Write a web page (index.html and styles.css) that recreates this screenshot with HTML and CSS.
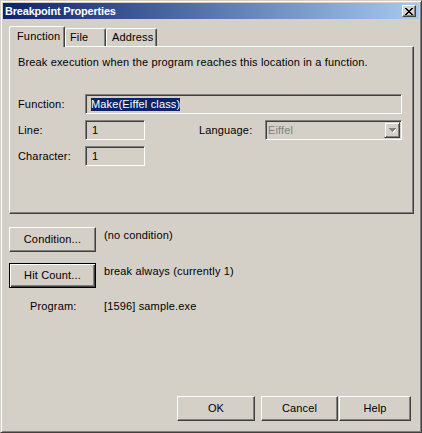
FILE: index.html
```html
<!DOCTYPE html>
<html>
<head>
<meta charset="utf-8">
<title>Breakpoint Properties</title>
<link rel="stylesheet" href="styles.css">
</head>
<body>
<div class="window">
  <div class="titlebar">
    <span class="title">Breakpoint Properties</span>
    <span class="close-btn">
      <svg width="8" height="7" viewBox="0 0 8 7" shape-rendering="crispEdges">
        <path fill="#000" d="M0 0h2v1h-2z M6 0h2v1h-2z M1 1h2v1h-2z M5 1h2v1h-2z M2 2h4v1h-4z M3 3h2v1h-2z M2 4h4v1h-4z M1 5h2v1h-2z M5 5h2v1h-2z M0 6h2v1h-2z M6 6h2v1h-2z"/>
      </svg>
    </span>
  </div>
  <div class="client">
    <div class="tabs">
      <div class="tab tab-active tab-function">Function</div>
      <div class="tab tab-file">File</div>
      <div class="tab tab-address">Address</div>
    </div>
    <div class="panel">
      <p class="desc">Break execution when the program reaches this location in a function.</p>
      <div class="row row-function">
        <span class="lbl">Function:</span>
        <div class="field field-wide"><span class="sel">Make(Eiffel class)</span></div>
      </div>
      <div class="row">
        <span class="lbl">Line:</span>
        <div class="field field-short">1</div>
        <span class="lbl lbl-lang">Language:</span>
        <div class="field combo">
          <span class="combo-text">Eiffel</span>
          <span class="combo-btn">
            <svg width="7" height="5" viewBox="0 0 7 5" shape-rendering="crispEdges">
              <path fill="#fff" d="M1 1h7v1h-7z M2 2h5v1h-5z M3 3h3v1h-3z M4 4h1v1h-1z"/>
              <path fill="#808080" d="M0 0h7v1h-7z M1 1h5v1h-5z M2 2h3v1h-3z M3 3h1v1h-1z"/>
            </svg>
          </span>
        </div>
      </div>
      <div class="row">
        <span class="lbl">Character:</span>
        <div class="field field-short">1</div>
      </div>
    </div>
    <div class="action-row action-condition">
      <button class="btn btn-side">Condition...</button>
      <span class="action-text">(no condition)</span>
    </div>
    <div class="action-row action-hit">
      <button class="btn btn-side btn-default">Hit Count...</button>
      <span class="action-text">break always (currently 1)</span>
    </div>
    <div class="program-row">
      <span class="program-lbl">Program:</span>
      <span class="program-val">[1596] sample.exe</span>
    </div>
    <div class="footer">
      <button class="btn btn-ok">OK</button>
      <button class="btn btn-cancel">Cancel</button>
      <button class="btn btn-help">Help</button>
    </div>
  </div>
</div>
</body>
</html>
```

FILE: styles.css
```css
* { box-sizing: border-box; }
html, body { margin: 0; padding: 0; }
body {
  width: 422px;
  height: 433px;
  overflow: hidden;
  background: #d4d0c8;
  font-family: "Liberation Sans", Arial, sans-serif;
  font-size: 11px;
  letter-spacing: 0.15px;
  color: #000;
}
.window {
  width: 422px;
  height: 433px;
  border: 1px solid;
  border-color: #d4d0c8 #404040 #404040 #d4d0c8;
  box-shadow: inset 1px 1px #fff, inset -1px -1px #808080;
  padding: 2px;
  display: flex;
  flex-direction: column;
  background: #d4d0c8;
}
.titlebar {
  height: 16px;
  flex: none;
  background: linear-gradient(to right, #0a246a, #a6caf0);
  display: flex;
  align-items: center;
  justify-content: space-between;
  padding: 0 3px 0 2px;
}
.title {
  color: #fff;
  font-weight: bold;
  font-size: 11px;
  letter-spacing: -0.2px;
  line-height: 13px;
}
.close-btn {
  width: 14px;
  height: 12px;
  display: flex;
  align-items: center;
  justify-content: center;
  background: #d4d0c8;
  border: 1px solid;
  border-color: #fff #404040 #404040 #fff;
  box-shadow: inset -1px -1px #808080;
}
.close-btn svg { display: block; }
.client {
  flex: 1;
  display: flex;
  flex-direction: column;
  padding: 7px 5px 0 6px;
}
.tabs {
  display: flex;
  align-items: flex-end;
  height: 20px;
  position: relative;
  z-index: 1;
}
.tab {
  background: #d4d0c8;
  border-top: 1px solid #fff;
  border-left: 1px solid #fff;
  border-right: 1px solid #404040;
  box-shadow: inset -1px 0 #808080;
  border-radius: 2px 2px 0 0;
  line-height: 13px;
  white-space: nowrap;
}
.tab-active {
  width: 56px;
  height: 21px;
  margin-bottom: -1px;
  padding: 3px 0 0 7px;
}
.tab-file {
  width: 41px;
  height: 18px;
  padding: 2px 0 0 4px;
}
.tab-address {
  width: 51px;
  height: 18px;
  padding: 2px 0 0 5px;
}
.panel {
  width: 405px;
  height: 168px;
  flex: none;
  border: 1px solid;
  border-color: #fff #404040 #404040 #fff;
  box-shadow: inset -1px -1px #808080;
  padding: 9px 11px 0 8px;
  display: flex;
  flex-direction: column;
  gap: 6px;
}
.desc {
  margin: 0 0 19px 0;
  line-height: 13px;
}
.row {
  display: flex;
  align-items: center;
  height: 20px;
}
.lbl {
  width: 67px;
  flex: none;
  line-height: 13px;
}
.lbl-lang {
  margin-left: 54px;
  width: 66px;
}
.field {
  height: 20px;
  border: 1px solid;
  border-color: #808080 #fff #fff #808080;
  box-shadow: inset 1px 1px #404040, inset -1px -1px #d4d0c8;
  background: #d4d0c8;
  display: flex;
  align-items: center;
  padding-left: 5px;
  line-height: 13px;
}
.field-wide { flex: 1; }
.field-short { width: 60px; padding-left: 6px; }
.sel {
  background: #0a246a;
  color: #fff;
}
.combo {
  flex: 1;
  padding: 1px 1px 1px 2px;
  justify-content: space-between;
}
.combo-text { color: #808080; }
.combo-btn {
  width: 16px;
  height: 16px;
  border: 1px solid;
  border-color: #d4d0c8 #404040 #404040 #d4d0c8;
  box-shadow: inset 1px 1px #fff, inset -1px -1px #808080;
  display: flex;
  align-items: center;
  justify-content: center;
}
.combo-btn svg { display: block; }
.action-row {
  display: flex;
  align-items: flex-start;
  gap: 8px;
}
.action-condition { margin-top: 13px; }
.action-hit { margin-top: 11px; }
.action-text {
  padding-top: 2px;
  line-height: 13px;
}
.btn {
  height: 25px;
  padding: 0;
  margin: 0;
  font: inherit;
  letter-spacing: inherit;
  color: #000;
  background: #d4d0c8;
  border: 1px solid;
  border-color: #fff #404040 #404040 #fff;
  box-shadow: inset -1px -1px #808080;
  border-radius: 0;
  text-align: center;
  line-height: 13px;
  -webkit-appearance: none;
  appearance: none;
}
.btn-side { width: 87px; }
.btn-default {
  border-color: #000;
  box-shadow: inset 1px 1px #fff, inset -1px -1px #404040, inset -2px -2px #808080;
}
.program-row {
  display: flex;
  margin-top: 12px;
  padding-left: 21px;
  line-height: 13px;
}
.program-lbl { width: 74px; }
.footer {
  margin-top: auto;
  margin-bottom: 9px;
  padding-right: 3px;
  display: flex;
  justify-content: flex-end;
}
.btn-ok { width: 78px; margin-right: 6px; }
.btn-cancel { width: 77px; margin-right: 1px; }
.btn-help { width: 72px; }
```
